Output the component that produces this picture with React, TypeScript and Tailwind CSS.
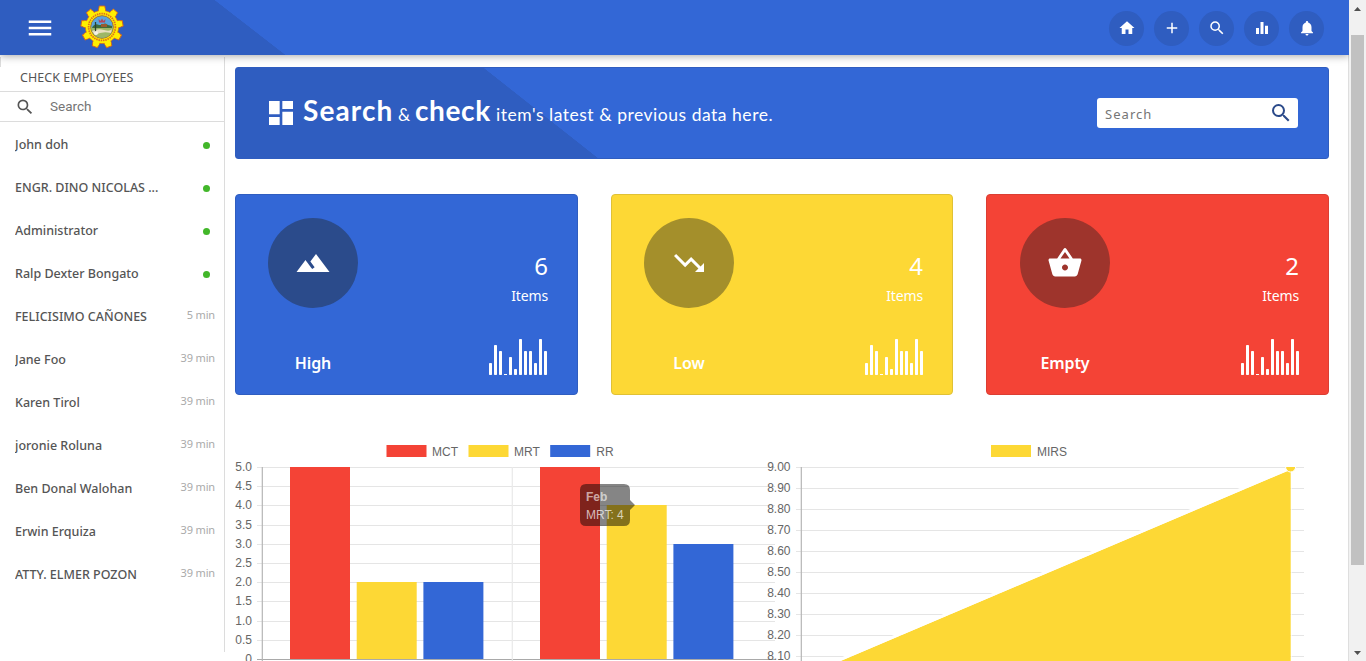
import type { ReactNode } from "react";
import {
  MdAdd,
  MdDashboard,
  MdEqualizer,
  MdHome,
  MdLandscape,
  MdMenu,
  MdNotifications,
  MdSearch,
  MdShoppingBasket,
  MdTrendingDown,
} from "react-icons/md";

type Employee = { name: string; seen?: string };

const employees: Employee[] = [
  { name: "John doh" },
  { name: "ENGR. DINO NICOLAS ..." },
  { name: "Administrator" },
  { name: "Ralp Dexter Bongato" },
  { name: "FELICISIMO CAÑONES", seen: "5 min" },
  { name: "Jane Foo", seen: "39 min" },
  { name: "Karen Tirol", seen: "39 min" },
  { name: "joronie Roluna", seen: "39 min" },
  { name: "Ben Donal Walohan", seen: "39 min" },
  { name: "Erwin Erquiza", seen: "39 min" },
  { name: "ATTY. ELMER POZON", seen: "39 min" },
];

function GearLogo() {
  const teeth = [0, 40, 80, 120, 160, 200, 240, 280, 320];
  return (
    <svg width="44" height="44" viewBox="-22 -22 44 44">
      {teeth.map((a) => (
        <path key={a} d="M-3.6 -15 L-2.8 -21 H2.8 L3.6 -15 Z" fill="#ffee00" stroke="#d9641a" strokeWidth="0.9" transform={`rotate(${a})`} />
      ))}
      <circle r="16.6" fill="#ffee00" stroke="#d9641a" strokeWidth="0.7" />
      {teeth.map((a) => (
        <path key={a} d="M-3 -14.5 V-18.5 H3 V-14.5 Z" fill="#ffee00" transform={`rotate(${a})`} />
      ))}
      <circle r="13.4" fill="none" stroke="#e0701c" strokeWidth="1.8" strokeDasharray="1.5 0.8" />
      <circle r="11.3" fill="#5aa5dc" stroke="#a8702c" strokeWidth="1" />
      <path d="M-10.8 0 H10.8 A10.8 10.8 0 0 1 -10.8 0 Z" fill="#9db766" />
      <path d="M-10 4 Q-4 1 2 3 T10 2 L9 6 Q0 4 -7 8 Z" fill="#e9dfc0" />
      <path d="M-9 -1 Q-6 -4 -3 -2 H0 Q3 -5 6 -2 L10 -1 V1 H-10 Z" fill="#3f6b3a" />
      <path d="M-1 -3 H5 V0 H-1 Z" fill="#9a5a30" />
      <path d="M-6.5 -5 V6" stroke="#2c4030" strokeWidth="1.3" />
      <path d="M-3 -4.500 L-3.500 -8 L-1.500 -6 L0 -8.500 L1.500 -6 L3.500 -8 L3 -4.500 Z" fill="#b5475a" />
      <circle cx="-6" cy="6" r="2" fill="#f4f1e6" />
    </svg>
  );
}

function RoundButton({ children }: { children: ReactNode }) {
  return (
    <button className="flex size-[35px] items-center justify-center rounded-full bg-[#2f5dc0] pb-px text-lg text-white">
      {children}
    </button>
  );
}

function Header() {
  return (
    <header className="z-10 flex h-[55px] shrink-0 items-center bg-[linear-gradient(37.8deg,#2f5dc0_174.7px,#3367d6_175.2px)] pr-[25px] pl-[25px] shadow-[0_1px_8px_rgba(0,0,0,0.35)]">
      <MdMenu className="mt-px size-[30px] text-white" />
      <div className="-mt-[2px] ml-[25px]">
        <GearLogo />
      </div>
      <nav className="mt-[2px] ml-auto flex gap-[10px]">
        <RoundButton><MdHome /></RoundButton>
        <RoundButton><MdAdd /></RoundButton>
        <RoundButton><MdSearch /></RoundButton>
        <RoundButton><MdEqualizer /></RoundButton>
        <RoundButton><MdNotifications /></RoundButton>
      </nav>
    </header>
  );
}

function Sidebar() {
  return (
    <aside className="mt-[2px] h-[595px] w-[225px] shrink-0 border-r border-[#dcdcdc] text-[#555]">
      <div className="flex h-[35px] border-b border-[#dcdcdc]">
        <div className="h-[10px] w-px bg-[#dcdcdc]" />
        <h2 className="pt-[12px] pl-[19px] text-[12.5px] leading-[18px] tracking-[0.05px]">CHECK EMPLOYEES</h2>
      </div>
      <div className="flex h-[30px] items-center border-b border-[#dcdcdc] pl-[15px]">
        <MdSearch className="size-5 text-[#555]" />
        <span className="ml-[15px] font-[Roboto] text-[13.5px] text-[#757575]">Search</span>
      </div>
      <ul>
        {employees.map((e) => (
          <li key={e.name} className="flex h-[43px] items-center pt-[2px] pr-[9px] pl-[15px]">
            <span className="h-[17px] w-[160px] overflow-hidden text-[12.5px] leading-[18px] font-medium whitespace-nowrap">
              {e.name}
            </span>
            {e.seen ? (
              <span className="mb-[2px] ml-auto text-[11px] tracking-[-0.15px] whitespace-nowrap text-[#aaa]">{e.seen}</span>
            ) : (
              <span className="mt-px mr-[5px] ml-auto size-[7px] rounded-full bg-[#42b72a]" />
            )}
          </li>
        ))}
      </ul>
    </aside>
  );
}

function Banner() {
  return (
    <section className="flex h-[92px] items-center rounded-[3px] border border-[#2f5dc0] bg-[linear-gradient(38.3deg,#2f5dc0_224px,#3367d6_224.5px)] pr-[30px] pl-[29px] text-white">
      <MdDashboard className="size-8" />
      <p className="mb-[6px] ml-[6px] flex items-baseline font-[Lato] whitespace-nowrap">
        <span className="w-[95px] text-[28px] font-bold tracking-[1.1px]">Search</span>
        <span className="w-[17px] text-[17px]">&amp;</span>
        <span className="w-[81px] text-[28px] font-bold tracking-[0.6px]">check</span>
        <span className="text-[17.5px] tracking-[0.52px]">item's latest &amp; previous data here.</span>
      </p>
      <div className="ml-auto flex h-[30px] w-[201px] items-center justify-between rounded-[3px] bg-white pr-[5px] pl-2">
        <span className="pt-[3px] text-[13px] tracking-[1.05px] text-[#757575]">Search</span>
        <MdSearch className="size-6 text-[#2b4a8a]" />
      </div>
    </section>
  );
}

const spark = [12, 30, 24, 1, 18, 6, 36, 24, 24, 12, 36, 24];

type StockProps = { label: string; count: number; card: string; disc: string; chart: string; icon: ReactNode };

function StockCard({ label, count, card, disc, chart, icon }: StockProps) {
  return (
    <article className={`flex h-[201px] justify-between rounded-[4px] border pt-[23px] pr-[29px] pb-[19px] text-white ${card}`}>
      <div className="flex w-[90px] flex-col items-center justify-between">
        <div className={`flex size-[90px] items-center justify-center rounded-full text-[36px] ${disc}`}>{icon}</div>
        <h3 className="text-base font-semibold tracking-[-0.1px]">{label}</h3>
      </div>
      <div className="flex flex-col items-end pt-[30px]">
        <span className="text-2xl leading-9">{count}</span>
        <span className="mt-px text-sm leading-[22px] tracking-[-0.15px]">Items</span>
        <svg className={`mt-8 ${chart}`} width="59" height="36" viewBox="0 0 59 36">
          {spark.map((h, i) => (
            <rect key={i} x={i * 5} y={36 - h} width="3" height={h} rx={h > 2 ? 0.7 : 0} fill="#fff" />
          ))}
        </svg>
      </div>
    </article>
  );
}

const barTicks = ["5.0", "4.5", "4.0", "3.5", "3.0", "2.5", "2.0", "1.5", "1.0", "0.5", "0"];
const barTickY = [467.5, 486.5, 505.5, 525.5, 544.500, 563.5, 582.5, 601.5, 621.5, 640.5, 659.5];
const bars = [
  { x: 290, top: 467, fill: "#f44336" },
  { x: 356.7, top: 582, fill: "#fdd835" },
  { x: 423.4, top: 582, fill: "#3367d6" },
  { x: 540, top: 467, fill: "#f44336" },
  { x: 606.7, top: 505, fill: "#fdd835" },
  { x: 673.4, top: 544, fill: "#3367d6" },
];

function BarChart() {
  return (
    <svg className="shrink-0 overflow-visible font-['Liberation_Sans'] text-xs" width="525" height="226" viewBox="235 435 525 226" fill="#666">
      <rect x="386.5" y="445" width="40" height="12" fill="#f44336" />
      <text x="432" y="456">MCT</text>
      <rect x="468.5" y="445" width="40" height="12" fill="#fdd835" />
      <text x="514" y="456">MRT</text>
      <rect x="550.2" y="445" width="40" height="12" fill="#3367d6" />
      <text x="596.3" y="456">RR</text>
      {barTicks.map((t, i) => (
        <g key={t}>
          <path d={`M257 ${barTickY[i]} H775`} stroke={t === "0" ? "#a9a9a9" : "#e5e5e5"} />
          <text x="252" y={barTickY[i] + 3.5} textAnchor="end">{t}</text>
        </g>
      ))}
      <path d="M262.300 467 V661" stroke="#b5b5b5" strokeWidth="1.2" />
      <path d="M512.300 467 V661" stroke="#e9e9e9" strokeWidth="1.2" />
      {bars.map((b) => (
        <rect key={b.x} x={b.x} y={b.top} width="60" height={659 - b.top} fill={b.fill} />
      ))}
      <path
        d="M586 484 H624 Q630 484 630 490 V500 L635 505 L630 510 V520 Q630 526 624 526 H586 Q580 526 580 520 V490 Q580 484 586 484 Z"
        fill="#000"
        fillOpacity="0.48"
      />
      <text x="586" y="501" fill="#fff" fillOpacity="0.62" fontWeight="bold">Feb</text>
      <text x="586" y="519" fill="#fff" fillOpacity="0.7">MRT: 4</text>
    </svg>
  );
}

const lineTicks = ["9.00", "8.90", "8.80", "8.70", "8.60", "8.50", "8.40", "8.30", "8.20", "8.10"];

function AreaChart() {
  return (
    <svg className="shrink-0 font-['Liberation_Sans'] text-xs" width="569" height="226" viewBox="760 435 569 226" fill="#666">
      <defs>
        <clipPath id="plot">
          <rect x="801" y="467" width="503" height="194" />
        </clipPath>
      </defs>
      <rect x="991" y="445" width="40" height="12" fill="#fdd835" />
      <text x="1037" y="456">MIRS</text>
      {lineTicks.map((t, i) => (
        <g key={t}>
          <path d={`M796 ${467.5 + i * 21} H1304`} stroke="#e5e5e5" />
          <text x="790.5" y={471 + i * 21} textAnchor="end">{t}</text>
        </g>
      ))}
      <path d="M801.300 467 V661" stroke="#b5b5b5" strokeWidth="1.2" />
      <g clipPath="url(#plot)">
        <path d="M830 665.500 L1290.7 469.500 V665 Z" fill="#fdd835" />
        <path d="M825 666 L1290.7 468" stroke="#fff" strokeWidth="3" />
        <path d="M1291.500 472 V661" stroke="#fff" strokeOpacity="0.6" />
        <circle cx="1290.6" cy="467" r="5" fill="#fdd835" stroke="#fff" />
      </g>
    </svg>
  );
}

function Scrollbar() {
  return (
    <div className="z-20 flex w-[17px] flex-col items-center justify-between bg-[#f1f1f1]">
      <svg width="17" height="17" viewBox="0 0 17 17"><path d="M5 11 L8.500 7 L12 11 Z" fill="#505050" /></svg>
      <div className="mt-[18px] mb-auto h-[530px] w-[13px] bg-[#c1c1c1]" />
      <svg width="17" height="17" viewBox="0 0 17 17"><path d="M5 7 L8.500 11 L12 7 Z" fill="#505050" /></svg>
    </div>
  );
}

export default function App() {
  return (
    <div className="flex h-[661px] w-[1366px] overflow-hidden bg-white font-['Noto_Sans',sans-serif]">
      <div className="flex w-[1349px] flex-col">
        <Header />
        <div className="flex min-h-0 grow border-r border-[#dedede]">
          <Sidebar />
          <main className="w-[1104px] pt-3 pl-[10px]">
            <Banner />
            <section className="mt-[35px] grid grid-cols-[343px_342px_343px] gap-[33px]">
              <StockCard label="High" count={6} card="bg-[#3367d6] border-[#2f5dc0] pl-8" disc="bg-[#2b4b8b]" chart="mr-0" icon={<MdLandscape />} />
              <StockCard label="Low" count={4} card="bg-[#fdd835] border-[#e0c135] pl-8" disc="bg-[#a48f2b]" chart="-mr-px" icon={<MdTrendingDown />} />
              <StockCard label="Empty" count={2} card="bg-[#f44336] border-[#db3e33] pl-[33px]" disc="bg-[#9e342c]" chart="-mr-px" icon={<MdShoppingBasket />} />
            </section>
            <section className="mt-10 flex">
              <BarChart />
              <AreaChart />
            </section>
          </main>
        </div>
      </div>
      <Scrollbar />
    </div>
  );
}
